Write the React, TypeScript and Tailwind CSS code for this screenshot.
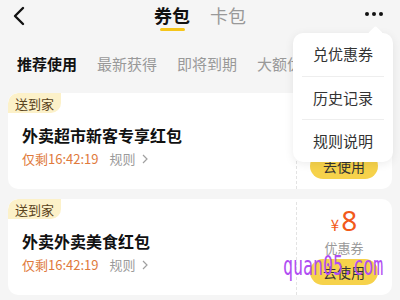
import React from "react";

const font = { fontFamily: '"Noto Sans CJK SC", "Noto Sans", sans-serif' };

function Card({ title }: { title: string }) {
  return (
    <div className="flex h-[96px] rounded-[10px] bg-white overflow-hidden">
      <div className="flex-1 flex flex-col">
        <div className="self-start h-[20px] px-[7px] flex items-center bg-[#fcf1c9] text-[13px] text-[#5a4320] rounded-tl-[10px] rounded-br-[10px] leading-none">
          送到家
        </div>
        <div className="mt-[11px] pl-[14px] text-[16px] font-bold text-[#111] leading-[22px]">{title}</div>
        <div className="mt-[4px] pl-[14px] flex items-center text-[13px] leading-[18px]">
          <span className="text-[#e07a3c]">仅剩16:42:19</span>
          <span className="ml-[11px] text-[#9a9a9a]">规则</span>
          <svg width="8" height="10" viewBox="0 0 8 10" className="ml-[5px]">
            <path d="M2 1 L6 5 L2 9" fill="none" stroke="#a0a0a0" strokeWidth="1.2" />
          </svg>
        </div>
      </div>
      <div className="w-[96px] relative flex flex-col items-center justify-end pb-[10px]">
        <div className="absolute left-0 top-[3px] bottom-0 border-l border-dashed border-[#e3e3e3]" />
        <div className="flex items-baseline text-[#f25a1a] leading-[30px]">
          <span className="text-[15px] mr-[2px]">¥</span>
          <span className="text-[28px]" style={{ fontFamily: '"Noto Sans", sans-serif' }}>8</span>
        </div>
        <div className="text-[13px] text-[#999] leading-[16px]">优惠券</div>
        <div className="mt-[3px] w-[68px] h-[26px] rounded-full bg-[#f6d24b] flex items-center justify-center text-[14px] text-[#333]">
          去使用
        </div>
      </div>
    </div>
  );
}

export default function App() {
  return (
    <div className="relative w-[400px] h-[300px] bg-[#f5f5f5] overflow-hidden" style={font}>
      {/* header */}
      <div className="relative h-[44px] flex items-start justify-center pt-[3px]">
        <svg width="14" height="20" viewBox="0 0 14 20" className="absolute left-[12px] top-[6px]">
          <path d="M11 2 L3 10 L11 18" fill="none" stroke="#111" strokeWidth="2.4" strokeLinecap="round" strokeLinejoin="round" />
        </svg>
        <div className="flex gap-[20px]">
          <div className="flex flex-col items-center">
            <span className="text-[18px] font-bold text-[#111] leading-[24px]">券包</span>
            <span className="mt-[1px] w-[25px] h-[3px] rounded-full bg-[#f5c51a]" />
          </div>
          <span className="text-[18px] text-[#999] leading-[24px]">卡包</span>
        </div>
        <div className="absolute right-[17px] top-[12px] flex gap-[3px]">
          <span className="w-[4px] h-[4px] rounded-full bg-[#111]" />
          <span className="w-[4px] h-[4px] rounded-full bg-[#111]" />
          <span className="w-[4px] h-[4px] rounded-full bg-[#111]" />
        </div>
      </div>
      {/* tabs */}
      <div className="h-[38px] flex items-center pl-[17px] gap-[20px] whitespace-nowrap text-[15px] leading-none">
        <span className="font-bold text-[#111]">推荐使用</span>
        <span className="text-[#999]">最新获得</span>
        <span className="text-[#999]">即将到期</span>
        <span className="text-[#999]">大额优惠</span>
      </div>
      {/* cards */}
      <div className="mt-[11px] px-[8px] flex flex-col gap-[10px]">
        <Card title="外卖超市新客专享红包" />
        <Card title="外卖外卖美食红包" />
      </div>
      {/* dropdown */}
      <div className="absolute left-[293px] top-[33px] w-[100px] rounded-[10px] bg-white shadow-[0_2px_10px_rgba(0,0,0,0.08)]">
        <div className="absolute right-[12px] -top-[5px] w-[11px] h-[11px] bg-white rotate-45 rounded-[2px]" />
        <div className="relative flex flex-col">
          <div className="h-[43px] flex items-center justify-center text-[15px] text-[#333]">兑优惠券</div>
          <div className="mx-[9px] h-px bg-[#eeeeee]" />
          <div className="h-[42px] flex items-center justify-center text-[15px] text-[#333]">历史记录</div>
          <div className="mx-[9px] h-px bg-[#eeeeee]" />
          <div className="h-[42px] flex items-center justify-center text-[15px] text-[#333]">规则说明</div>
        </div>
      </div>
      {/* watermark */}
      <div
        className="absolute left-[283px] top-[253px] text-[26px] leading-none text-[#b04ef2] origin-left scale-x-[0.64] whitespace-nowrap"
        style={{ fontFamily: '"DejaVu Sans Mono", monospace' }}
      >
        quan05.com
      </div>
    </div>
  );
}
